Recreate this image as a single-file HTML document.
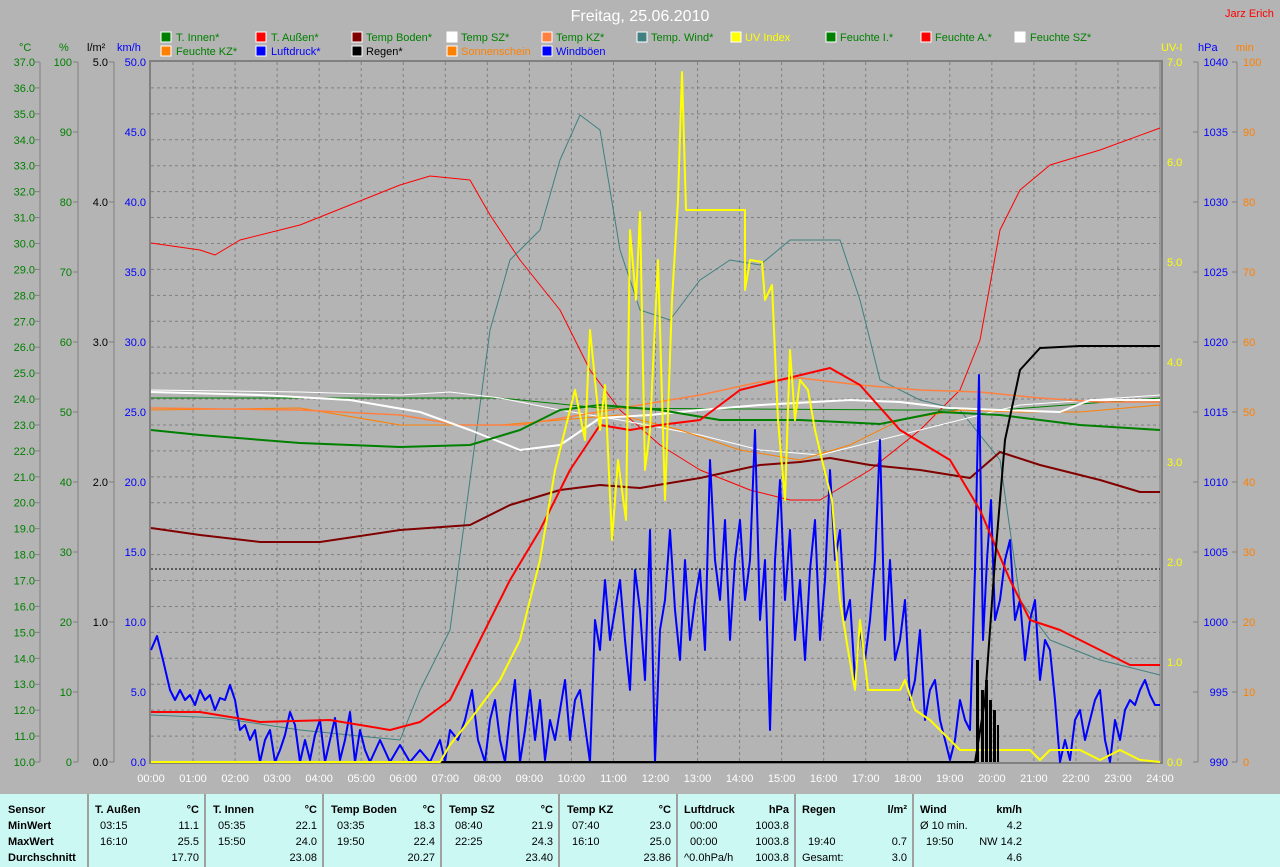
<!DOCTYPE html>
<html><head><meta charset="utf-8"><style>
html,body{margin:0;padding:0;background:#b4b4b4;}
svg{display:block;font-family:"Liberation Sans",Arial,sans-serif;}
</style></head><body>
<svg width="1280" height="867" viewBox="0 0 1280 867" xmlns="http://www.w3.org/2000/svg">
<rect width="1280" height="867" fill="#b4b4b4"/>
<text x="640" y="21" font-size="16" fill="#fff" text-anchor="middle">Freitag, 25.06.2010</text>
<text x="1225" y="17" font-size="11" fill="#f00">Jarz Erich</text>
<g font-size="11">
<rect x="161" y="32" width="10" height="10" fill="#008000" stroke="#fff"/><text x="176" y="41" fill="#008000">T. Innen*</text>
<rect x="256" y="32" width="10" height="10" fill="#f00" stroke="#fff"/><text x="271" y="41" fill="#008000">T. Außen*</text>
<rect x="352" y="32" width="10" height="10" fill="#800000" stroke="#fff"/><text x="366" y="41" fill="#008000">Temp Boden*</text>
<rect x="447" y="32" width="10" height="10" fill="#fff" stroke="#fff"/><text x="461" y="41" fill="#008000">Temp SZ*</text>
<rect x="542" y="32" width="10" height="10" fill="#ff8040" stroke="#fff"/><text x="556" y="41" fill="#008000">Temp KZ*</text>
<rect x="637" y="32" width="10" height="10" fill="#408080" stroke="#fff"/><text x="651" y="41" fill="#008000">Temp. Wind*</text>
<rect x="731" y="32" width="10" height="10" fill="#ff0" stroke="#fff"/><text x="745" y="41" fill="#ff0">UV Index</text>
<rect x="826" y="32" width="10" height="10" fill="#008000" stroke="#fff"/><text x="840" y="41" fill="#008000">Feuchte I.*</text>
<rect x="921" y="32" width="10" height="10" fill="#f00" stroke="#fff"/><text x="935" y="41" fill="#008000">Feuchte A.*</text>
<rect x="1015" y="32" width="10" height="10" fill="#fff" stroke="#fff"/><text x="1030" y="41" fill="#008000">Feuchte SZ*</text>
<rect x="161" y="46" width="10" height="10" fill="#ff8000" stroke="#fff"/><text x="176" y="55" fill="#008000">Feuchte KZ*</text>
<rect x="256" y="46" width="10" height="10" fill="#00f" stroke="#fff"/><text x="271" y="55" fill="#00f">Luftdruck*</text>
<rect x="352" y="46" width="10" height="10" fill="#000" stroke="#fff"/><text x="366" y="55" fill="#000">Regen*</text>
<rect x="447" y="46" width="10" height="10" fill="#ff8000" stroke="#fff"/><text x="461" y="55" fill="#ff8000">Sonnenschein</text>
<rect x="542" y="46" width="10" height="10" fill="#00f" stroke="#fff"/><text x="556" y="55" fill="#00f">Windböen</text>
</g>
<g font-size="11">
<text x="19" y="51" fill="#008000">°C</text><text x="59" y="51" fill="#008000">%</text>
<text x="87" y="51" fill="#000">l/m²</text><text x="117" y="51" fill="#00f">km/h</text>
<text x="1161" y="51" fill="#ff0">UV-I</text><text x="1198" y="51" fill="#00f">hPa</text><text x="1236" y="51" fill="#ff8000">min</text>
</g>
<g stroke="#808080" stroke-width="1">
<line x1="40" y1="62" x2="40" y2="762"/><line x1="78" y1="62" x2="78" y2="762"/>
<line x1="114" y1="62" x2="114" y2="762"/><line x1="1198" y1="62" x2="1198" y2="762"/>
<line x1="1237" y1="62" x2="1237" y2="762"/>
</g>
<g id="grid" stroke="#808080" stroke-dasharray="3,3" stroke-width="1"></g>
<g id="ax" font-size="11"></g>
<rect x="150" y="61" width="1012" height="702" fill="none" stroke="#808080" stroke-width="2"/>
<line x1="1160" y1="62" x2="1160" y2="762" stroke="#808080" stroke-width="1"/>
<line x1="151" y1="569" x2="1160" y2="569" stroke="#000" stroke-dasharray="2,2"/>
<g fill="none" stroke-linejoin="round">
<polyline stroke="#f00" stroke-width="1" points="151,243 200,250 215,255 240,240 300,225 350,205 400,185 430,176 470,180 490,215 520,260 560,310 590,370 620,410 660,445 700,470 750,490 790,500 820,500 870,470 920,430 960,390 980,340 1000,230 1020,190 1050,165 1100,150 1160,128"/>
<polyline stroke="#408080" stroke-width="1" points="151,715 220,718 300,730 400,740 420,690 450,630 470,480 490,330 510,260 540,230 560,160 580,115 600,130 620,250 640,310 670,320 700,280 730,260 760,265 790,240 820,240 840,240 860,300 880,380 920,400 960,410 1000,460 1020,600 1050,640 1100,660 1160,675"/>
<polyline stroke="#008000" stroke-width="1" points="151,398 500,398 600,408 900,410 1000,410 1160,398"/>
<polyline stroke="#fff" stroke-width="1" points="151,390 300,392 400,395 450,392 500,398 560,410 620,420 700,435 760,450 820,455 880,440 960,420 1020,405 1160,395"/>
<polyline stroke="#ff8000" stroke-width="1" points="151,410 300,408 400,425 500,425 560,420 620,415 680,430 740,450 800,460 850,445 900,420 960,410 1020,412 1080,412 1160,405"/>
<polyline stroke="#ff8040" stroke-width="1.5" points="151,408 300,410 400,415 460,425 520,425 580,415 640,405 700,395 760,382 800,378 860,385 920,390 980,392 1040,398 1100,402 1160,402"/>
<polyline stroke="#fff" stroke-width="2" points="151,392 260,395 350,400 420,412 470,430 520,450 560,445 600,418 650,415 700,410 760,405 850,400 900,402 950,408 1000,410 1060,412 1090,400 1160,400"/>
<polyline stroke="#008000" stroke-width="2" points="151,430 200,435 300,443 400,447 470,445 520,430 560,410 600,405 660,410 720,420 800,420 880,424 940,412 1000,415 1080,425 1160,430"/>
<polyline stroke="#800000" stroke-width="2" points="151,528 200,535 260,542 320,542 400,530 470,525 510,505 560,490 600,485 640,488 700,478 760,465 800,462 830,458 870,465 920,470 970,478 1000,452 1040,465 1100,480 1140,492 1160,492"/>
<polyline stroke="#00f" stroke-width="2" points="151,650 157,636 163,660 170,690 175,700 180,690 185,700 190,695 195,705 200,690 205,700 210,695 215,710 220,698 225,700 230,685 235,700 240,730 245,725 250,740 255,730 260,762 265,740 270,730 275,762 280,750 285,735 290,712 295,725 300,762 305,740 310,760 315,735 320,720 325,762 330,740 335,718 340,760 345,740 350,712 355,762 360,730 365,750 370,762 380,740 390,762 400,745 410,762 420,750 430,762 440,740 445,762 450,730 458,740 465,720 472,690 478,740 485,762 490,720 495,700 500,740 505,762 510,715 515,680 520,762 525,730 530,690 535,740 540,700 545,760 550,720 555,740 560,710 565,680 570,740 575,700 580,690 590,762 595,620 600,650 605,580 610,640 615,610 620,580 625,640 630,690 635,570 640,610 645,680 650,530 655,762 660,630 665,600 670,530 675,610 680,660 685,560 690,640 695,600 700,570 705,650 710,460 715,560 720,600 725,520 730,640 735,560 740,520 745,600 750,560 755,430 760,620 765,560 770,730 775,560 780,480 785,600 790,530 795,640 800,580 805,660 810,570 815,520 820,640 825,580 830,470 835,560 840,530 845,620 850,600 855,680 860,630 865,660 870,620 875,560 880,440 885,640 890,560 895,660 900,640 905,600 910,700 915,680 920,630 925,720 930,690 935,680 940,720 945,740 950,760 955,740 960,700 965,720 970,730 975,570 979,375 983,640 987,560 991,500 995,620 1000,600 1005,560 1010,540 1015,620 1020,600 1025,660 1030,620 1035,600 1040,680 1045,640 1050,650 1055,700 1060,762 1065,740 1070,760 1075,720 1080,710 1085,740 1090,720 1095,700 1100,690 1105,740 1110,762 1115,720 1120,740 1125,710 1130,700 1135,705 1140,690 1145,680 1150,695 1155,705 1160,705"/>
<polyline stroke="#f00" stroke-width="2" points="151,712 200,712 260,722 330,720 390,730 420,722 450,700 480,640 510,580 540,530 570,470 600,425 630,430 660,425 700,420 740,390 780,380 830,368 860,385 900,430 950,460 980,510 1010,580 1030,620 1060,630 1100,650 1130,665 1160,665"/>
<polyline stroke="#000" stroke-width="2" points="151,762 975,762 985,700 995,560 1005,440 1020,370 1040,348 1080,346 1160,346"/>
<polyline stroke="#ff0" stroke-width="2" points="151,762 440,762 450,745 470,720 500,680 520,640 540,560 555,470 565,430 575,390 585,440 590,330 600,430 605,385 612,540 618,460 626,520 630,230 636,300 640,212 645,470 650,430 658,260 665,500 672,300 678,200 682,72 686,210 745,210 745,290 750,260 762,262 765,300 772,285 778,420 785,500 790,350 795,420 800,380 808,390 815,430 822,460 832,500 840,600 848,650 855,690 860,620 868,690 880,690 900,690 905,680 915,710 930,720 950,740 960,750 1000,750 1030,750 1040,760 1050,750 1080,750 1100,760 1120,750 1140,760 1160,762"/>
</g>
<g fill="#000">
<rect x="976" y="660" width="3" height="102"/><rect x="981" y="690" width="3" height="72"/><rect x="985" y="680" width="3" height="82"/><rect x="989" y="700" width="3" height="62"/><rect x="993" y="710" width="3" height="52"/><rect x="997" y="725" width="2" height="37"/>
</g>
<rect x="0" y="794" width="1280" height="73" fill="#ccf8f4"/>
<g stroke="#a0a0a0" stroke-width="2">
<line x1="88" y1="794" x2="88" y2="867"/><line x1="205" y1="794" x2="205" y2="867"/><line x1="323" y1="794" x2="323" y2="867"/><line x1="441" y1="794" x2="441" y2="867"/><line x1="559" y1="794" x2="559" y2="867"/><line x1="677" y1="794" x2="677" y2="867"/><line x1="795" y1="794" x2="795" y2="867"/><line x1="913" y1="794" x2="913" y2="867"/>
</g>
<g font-size="11" fill="#000">
<g font-weight="bold"><text x="8" y="813">Sensor</text><text x="8" y="829">MinWert</text><text x="8" y="845">MaxWert</text><text x="8" y="861">Durchschnitt</text>
<text x="95" y="813">T. Außen</text><text x="199" y="813" text-anchor="end">°C</text>
<text x="213" y="813">T. Innen</text><text x="317" y="813" text-anchor="end">°C</text>
<text x="331" y="813">Temp Boden</text><text x="435" y="813" text-anchor="end">°C</text>
<text x="449" y="813">Temp SZ</text><text x="553" y="813" text-anchor="end">°C</text>
<text x="567" y="813">Temp KZ</text><text x="671" y="813" text-anchor="end">°C</text>
<text x="684" y="813">Luftdruck</text><text x="789" y="813" text-anchor="end">hPa</text>
<text x="802" y="813">Regen</text><text x="907" y="813" text-anchor="end">l/m²</text>
<text x="920" y="813">Wind</text><text x="1022" y="813" text-anchor="end">km/h</text></g>
<text x="100" y="829">03:15</text><text x="199" y="829" text-anchor="end">11.1</text><text x="100" y="845">16:10</text><text x="199" y="845" text-anchor="end">25.5</text><text x="199" y="861" text-anchor="end">17.70</text>
<text x="218" y="829">05:35</text><text x="317" y="829" text-anchor="end">22.1</text><text x="218" y="845">15:50</text><text x="317" y="845" text-anchor="end">24.0</text><text x="317" y="861" text-anchor="end">23.08</text>
<text x="337" y="829">03:35</text><text x="435" y="829" text-anchor="end">18.3</text><text x="337" y="845">19:50</text><text x="435" y="845" text-anchor="end">22.4</text><text x="435" y="861" text-anchor="end">20.27</text>
<text x="455" y="829">08:40</text><text x="553" y="829" text-anchor="end">21.9</text><text x="455" y="845">22:25</text><text x="553" y="845" text-anchor="end">24.3</text><text x="553" y="861" text-anchor="end">23.40</text>
<text x="572" y="829">07:40</text><text x="671" y="829" text-anchor="end">23.0</text><text x="572" y="845">16:10</text><text x="671" y="845" text-anchor="end">25.0</text><text x="671" y="861" text-anchor="end">23.86</text>
<text x="690" y="829">00:00</text><text x="789" y="829" text-anchor="end">1003.8</text><text x="690" y="845">00:00</text><text x="789" y="845" text-anchor="end">1003.8</text><text x="684" y="861">^0.0hPa/h</text><text x="789" y="861" text-anchor="end">1003.8</text>
<text x="808" y="845">19:40</text><text x="907" y="845" text-anchor="end">0.7</text><text x="802" y="861">Gesamt:</text><text x="907" y="861" text-anchor="end">3.0</text>
<text x="920" y="829">Ø 10 min.</text><text x="1022" y="829" text-anchor="end">4.2</text><text x="926" y="845">19:50</text><text x="1022" y="845" text-anchor="end">NW 14.2</text><text x="1022" y="861" text-anchor="end">4.6</text>
</g>
<script>
var ns="http://www.w3.org/2000/svg";
function el(p,t,a,txt){var e=document.createElementNS(ns,t);for(var k in a)e.setAttribute(k,a[k]);if(txt!==undefined)e.textContent=txt;p.appendChild(e);return e;}
var g=document.getElementById('grid'),ax=document.getElementById('ax');
for(var h=1;h<24;h++){var x=151+h*1009/24;el(g,'line',{x1:x,y1:62,x2:x,y2:762});}
for(var t=11;t<37;t++){var y=762-(t-10)*700/27;el(g,'line',{x1:151,y1:y,x2:1160,y2:y});}
for(var t=10;t<=37;t++){var y=762-(t-10)*700/27;el(ax,'text',{x:35,y:y+4,fill:'#008000','text-anchor':'end'},t.toFixed(1));el(ax,'line',{x1:35,y1:y,x2:40,y2:y,stroke:'#808080'});}
for(var i=0;i<=10;i++){var y=762-i*70;el(ax,'text',{x:72,y:y+4,fill:'#008000','text-anchor':'end'},String(i*10));el(ax,'line',{x1:73,y1:y,x2:78,y2:y,stroke:'#808080'});
el(ax,'text',{x:146,y:y+4,fill:'#00f','text-anchor':'end'},(i*5).toFixed(1));
el(ax,'text',{x:1228,y:y+4,fill:'#00f','text-anchor':'end'},String(990+i*5));el(ax,'line',{x1:1193,y1:y,x2:1198,y2:y,stroke:'#808080'});
el(ax,'text',{x:1243,y:y+4,fill:'#ff8000'},String(i*10));el(ax,'line',{x1:1232,y1:y,x2:1237,y2:y,stroke:'#808080'});}
for(var i=0;i<=5;i++){var y=762-i*140;el(ax,'text',{x:108,y:y+4,fill:'#000','text-anchor':'end'},i.toFixed(1));el(ax,'line',{x1:109,y1:y,x2:114,y2:y,stroke:'#808080'});}
for(var i=0;i<=7;i++){var y=762-i*100;el(ax,'text',{x:1167,y:y+4,fill:'#ff0'},i.toFixed(1));}
for(var h=0;h<=24;h++){var x=151+h*1009/24;el(ax,'text',{x:x,y:782,fill:'#fff','text-anchor':'middle'},(h<10?'0':'')+h+':00');}
</script>
</svg>
</body></html>
